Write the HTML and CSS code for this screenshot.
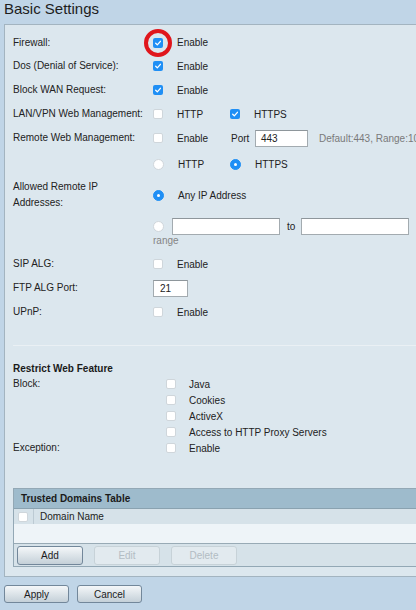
FILE: index.html
```html
<!DOCTYPE html>
<html>
<head>
<meta charset="utf-8">
<title>Basic Settings</title>
<link rel="stylesheet" href="styles.css">
</head>
<body>
<h1 class="title">Basic Settings</h1>
<div class="panel">
  <div class="row h23">
    <div class="lbl">Firewall:</div>
    <div class="ctl"><span class="opt"><span class="cb on"><svg viewBox="0 0 10 10"><path d="M2.7 5.3 L4.3 6.9 L7.4 3.3" fill="none" stroke="#fff" stroke-width="1.3" stroke-linecap="round" stroke-linejoin="round"/></svg><span class="ring"></span></span><span>Enable</span></span></div>
  </div>
  <div class="row">
    <div class="lbl">Dos (Denial of Service):</div>
    <div class="ctl"><span class="opt"><span class="cb on"><svg viewBox="0 0 10 10"><path d="M2.7 5.3 L4.3 6.9 L7.4 3.3" fill="none" stroke="#fff" stroke-width="1.3" stroke-linecap="round" stroke-linejoin="round"/></svg></span><span>Enable</span></span></div>
  </div>
  <div class="row">
    <div class="lbl">Block WAN Request:</div>
    <div class="ctl"><span class="opt"><span class="cb on"><svg viewBox="0 0 10 10"><path d="M2.7 5.3 L4.3 6.9 L7.4 3.3" fill="none" stroke="#fff" stroke-width="1.3" stroke-linecap="round" stroke-linejoin="round"/></svg></span><span>Enable</span></span></div>
  </div>
  <div class="row">
    <div class="lbl">LAN/VPN Web Management:</div>
    <div class="ctl">
      <span class="opt"><span class="cb"></span><span>HTTP</span></span>
      <span class="opt"><span class="cb on"><svg viewBox="0 0 10 10"><path d="M2.7 5.3 L4.3 6.9 L7.4 3.3" fill="none" stroke="#fff" stroke-width="1.3" stroke-linecap="round" stroke-linejoin="round"/></svg></span><span>HTTPS</span></span>
    </div>
  </div>
  <div class="row">
    <div class="lbl">Remote Web Management:</div>
    <div class="ctl">
      <span class="opt"><span class="cb"></span><span>Enable</span></span>
      <span class="port">Port</span>
      <span class="field port-field">443</span>
      <span class="hint">Default:443, Range:1024 - 65535</span>
    </div>
  </div>
  <div class="row h28">
    <div class="lbl"></div>
    <div class="ctl">
      <span class="opt"><span class="rd"></span><span>HTTP</span></span>
      <span class="opt"><span class="rd on"></span><span>HTTPS</span></span>
    </div>
  </div>
  <div class="row h34">
    <div class="lbl two">Allowed Remote IP<br>Addresses:</div>
    <div class="ctl"><span class="opt wide"><span class="rd on"></span><span>Any IP Address</span></span></div>
  </div>
  <div class="row rng">
    <div class="lbl"></div>
    <div class="ctl">
      <div class="rng-line">
        <span class="rd"></span>
        <span class="field ip"></span>
        <span class="to">to</span>
        <span class="field ip"></span>
      </div>
      <div class="rng-note">range</div>
    </div>
  </div>
  <div class="row sip">
    <div class="lbl">SIP ALG:</div>
    <div class="ctl"><span class="opt"><span class="cb"></span><span>Enable</span></span></div>
  </div>
  <div class="row">
    <div class="lbl">FTP ALG Port:</div>
    <div class="ctl"><span class="field ftp">21</span></div>
  </div>
  <div class="row">
    <div class="lbl">UPnP:</div>
    <div class="ctl"><span class="opt"><span class="cb"></span><span>Enable</span></span></div>
  </div>

  <div class="sep"></div>

  <div class="sect-title">Restrict Web Feature</div>
  <div class="rrow">
    <div class="lbl">Block:</div>
    <div class="ctl"><span class="opt2"><span class="cb"></span><span>Java</span></span></div>
  </div>
  <div class="rrow">
    <div class="lbl"></div>
    <div class="ctl"><span class="opt2"><span class="cb"></span><span>Cookies</span></span></div>
  </div>
  <div class="rrow">
    <div class="lbl"></div>
    <div class="ctl"><span class="opt2"><span class="cb"></span><span>ActiveX</span></span></div>
  </div>
  <div class="rrow">
    <div class="lbl"></div>
    <div class="ctl"><span class="opt2"><span class="cb"></span><span>Access to HTTP Proxy Servers</span></span></div>
  </div>
  <div class="rrow">
    <div class="lbl">Exception:</div>
    <div class="ctl"><span class="opt2"><span class="cb"></span><span>Enable</span></span></div>
  </div>

  <div class="table">
    <div class="thead">Trusted Domains Table</div>
    <div class="tcols">
      <div class="tsel"><span class="cb"></span></div>
      <div class="tname">Domain Name</div>
    </div>
    <div class="tempty"></div>
    <div class="tbtns">
      <button class="btn">Add</button>
      <button class="btn dis">Edit</button>
      <button class="btn dis">Delete</button>
    </div>
  </div>
</div>
<div class="actions">
  <button class="btn big">Apply</button>
  <button class="btn big">Cancel</button>
</div>
</body>
</html>
```
FILE: styles.css
```css
* { box-sizing: border-box; }
html, body { margin: 0; padding: 0; }
body {
  background: #c0d5e7;
  font-family: "Liberation Sans", Arial, sans-serif;
  font-size: 10px;
  color: #222;
  width: 416px;
  height: 610px;
  overflow: hidden;
}
.title {
  margin: 0;
  padding-left: 4px;
  font-size: 15px;
  font-weight: normal;
  line-height: 18px;
  height: 24px;
  color: #1d1d1d;
}
.panel {
  margin-left: 4px;
  width: 440px;
  background: #dce7ee;
  border: 1px solid #a3b4c0;
  padding: 6px 0 9px 8px;
}
.row {
  display: grid;
  grid-template-columns: 140px 1fr;
  align-items: center;
  height: 24px;
}
.row.h23 { height: 23px; }
.row.h28 { height: 28px; }
.row.h34 { height: 34px; }
.lbl { line-height: 12px; }
.lbl.two { line-height: 16px; }
.ctl { display: flex; align-items: center; white-space: nowrap; }
.opt { display: inline-flex; align-items: center; gap: 14px; width: 77px; flex: none; }
.opt.wide { width: auto; }
.cb {
  position: relative;
  display: inline-block;
  flex: none;
  width: 10px;
  height: 10px;
  border-radius: 2px;
  background: #fff;
  border: 1px solid #cfd6db;
}
.cb.on { background: #1f8ff5; border: none; }
.cb svg { display: block; width: 10px; height: 10px; }
.ring {
  position: absolute;
  left: 50%;
  top: 50%;
  width: 28px;
  height: 28px;
  margin: -14px 0 0 -14px;
  border: 4px solid #e0161c;
  border-radius: 50%;
}
.rd {
  display: inline-flex;
  align-items: center;
  justify-content: center;
  flex: none;
  width: 11px;
  height: 11px;
  border-radius: 50%;
  background: #fff;
  border: 1px solid #d0d6db;
}
.rd.on { background: #1f8ff5; border-color: #1f8ff5; }
.rd.on::after {
  content: "";
  width: 3px;
  height: 3px;
  border-radius: 50%;
  background: #fff;
}
.port { margin-left: 1px; width: 24px; }
.field {
  display: inline-flex;
  align-items: center;
  height: 17px;
  background: #fff;
  border: 1px solid #a3abb0;
  border-top-color: #8e969b;
  padding-left: 5px;
  font-size: 10px;
  color: #222;
  flex: none;
}
.port-field { width: 53px; }
.hint { margin-left: 11px; color: #7a7a7a; }
.row.rng { height: 35px; align-items: start; }
.row.rng .ctl { display: block; padding-top: 5px; }
.rng-line { display: flex; align-items: center; height: 18px; }
.rng-line .ip { width: 108px; margin-left: 8px; height: 17px; }
.rng-line .to { margin-left: 7px; }
.rng-line .to + .ip { margin-left: 6px; }
.rng-note { line-height: 12px; color: #858585; }
.row.sip { margin-top: 5px; }
.ftp { width: 35px; padding-left: 6px; }
.sep {
  margin-top: 21px;
  height: 1px;
  background: #eaf0f4;
}
.sect-title {
  margin-top: 16px;
  line-height: 14px;
  font-weight: bold;
  color: #1a1a1a;
}
.rrow {
  display: grid;
  grid-template-columns: 153px 1fr;
  align-items: center;
  height: 16px;
}
.opt2 { display: inline-flex; align-items: center; gap: 13px; }
.table {
  margin-top: 32px;
  border: 1px solid #93a8b5;
}
.thead {
  height: 20px;
  line-height: 19px;
  padding-left: 7px;
  background: #9ebbcc;
  border-bottom: 1px solid #8aa2b0;
  font-weight: bold;
  color: #1a1a1a;
}
.tcols {
  display: flex;
  height: 15px;
  background: #d6e2e9;
}
.tsel {
  width: 20px;
  display: flex;
  align-items: center;
  padding-left: 4px;
  border-right: 1px solid #bccad3;
}
.tname { padding-left: 6px; line-height: 15px; }
.tempty {
  height: 20px;
  background: #eef4f8;
  border-bottom: 1px solid #98aab5;
}
.tbtns {
  display: flex;
  gap: 11px;
  height: 22px;
  padding: 2px 0 0 3px;
  background: #d6e2e9;
}
.btn {
  display: inline-flex;
  align-items: center;
  justify-content: center;
  width: 66px;
  height: 19px;
  margin: 0;
  padding: 0;
  border: 1px solid #72879a;
  border-radius: 3px;
  background: linear-gradient(#f4f7f9, #c4d0d8);
  font-family: "Liberation Sans", Arial, sans-serif;
  font-size: 10px;
  color: #1c1c1c;
}
.btn.dis {
  border-color: #c7d2d8;
  background: #e2eaef;
  color: #b2bcc3;
}
.actions {
  display: flex;
  gap: 8px;
  margin: 8px 0 0 4px;
}
.btn.big { width: 65px; height: 18px; }
```
